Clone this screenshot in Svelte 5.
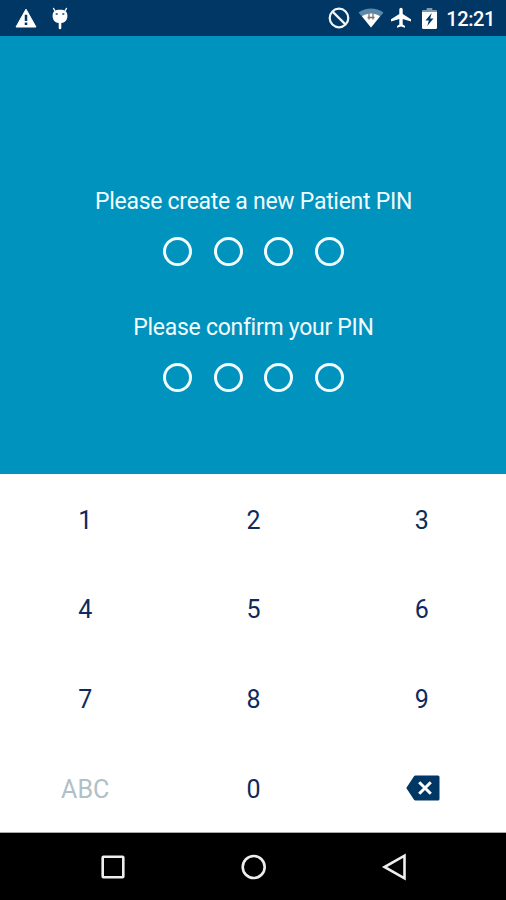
<script>
  /**
   * Patient PIN setup screen: two PIN rows above a numeric keypad
   */
  const PIN_LENGTH = 4;

  const prompts = ['Please create a new Patient PIN', 'Please confirm your PIN'];

  const keys = ['1', '2', '3', '4', '5', '6', '7', '8', '9', 'ABC', '0', 'delete'];
</script>

<div class="screen">
  <header class="status-bar">
    <svg class="warning" width="22" height="20" viewBox="0 0 22 20" aria-hidden="true">
      <path d="M11 1.200 21 19H1Z" fill="#fff" stroke="#fff" stroke-width="1" stroke-linejoin="round" />
      <path d="M11 6.800v6.200M11 14.400v2.500" stroke="#003764" stroke-width="2.500" />
    </svg>
    <svg class="debug" width="18" height="23" viewBox="0 0 18 23" aria-hidden="true">
      <path d="M4 4 2.500 1.400M14 4l1.500-2.600" stroke="#fff" stroke-width="1.300" stroke-linecap="round" />
      <path d="M1.600 9C1.600 4.500 4 2.800 9 2.800S16.400 4.500 16.400 9c0 4-2.600 6.700-6.100 7.100V21a1.300 1.300 0 0 1-2.600 0v-4.900C4.200 15.700 1.600 13 1.600 9Z" fill="#fff" />
      <path d="M4.700 7h2M11.300 7h2" stroke="#4c7496" stroke-width="1.800" />
    </svg>

    <div class="system">
      <svg class="blocked" width="22" height="22" viewBox="0 0 22 22" fill="none" stroke="#f2f5f8" stroke-width="2.200" aria-hidden="true">
        <circle cx="11" cy="11" r="9.300" />
        <path d="m4.600 4.600 12.800 12.800" />
      </svg>
      <svg class="wifi" width="26" height="20" viewBox="0 0 26 20" aria-hidden="true">
        <path d="M.5 4.500C8-.7 18-.7 25.500 4.500L13 19.500Z" fill="#5b88a8" />
        <path d="M4 8.200c5.500-3.600 12.500-3.600 18 0L13 19.500Z" fill="#fff" />
        <path d="M11 5.500v6M15 5.500v6M9.500 9.500h7" stroke="#77746f" stroke-width="1.300" />
      </svg>
      <svg class="plane" width="22" height="22" viewBox="0 0 22 22" fill="#fff" aria-hidden="true">
        <path d="M21 14.500v-2.200L12.700 7V2.500a1.700 1.700 0 0 0-3.400 0V7L1 12.300v2.200l8.300-2.600v5.500L7 19.100v1.700l4-1.200 4 1.200v-1.700l-2.300-1.700v-5.500Z" />
      </svg>
      <svg class="battery" width="15" height="21" viewBox="0 0 15 21" aria-hidden="true">
        <path d="M4.700 0h5.600v2H14q1 0 1 1v3H0V3q0-1 1-1h3.700Z" fill="#7f9bb1" />
        <path d="M0 4h15v15.500q0 1.500-1.500 1.500h-12Q0 21 0 19.500Z" fill="#fff" />
        <path d="M9.700 5 3.500 12.500h3.300L5.300 18l6.200-7.500H8.200Z" fill="#003764" />
      </svg>
      <span class="clock">12:21</span>
    </div>
  </header>

  <main class="pin-panel">
    {#each prompts as prompt}
      <section class="pin-entry">
        <h1>{prompt}</h1>
        <div class="dots">
          {#each Array(PIN_LENGTH) as _}
            <span class="dot"></span>
          {/each}
        </div>
      </section>
    {/each}
  </main>

  <div class="keypad">
    {#each keys as key}
      {#if key === 'delete'}
        <button class="key" aria-label="Delete">
          <svg width="34" height="26" viewBox="0 0 34 26" aria-hidden="true">
            <path d="M9.500.5H32Q33.500.5 33.500 2v22q0 1.500-1.500 1.500H9.500Q8.500 25.500 8 24.700L.3 13 8 1.300Q8.500.5 9.500.5Z" fill="#003764" />
            <path d="m13.200 7.200 11.600 11.600M24.800 7.200 13.200 18.800" stroke="#fff" stroke-width="3" />
          </svg>
        </button>
      {:else}
        <button class="key" class:muted={key === 'ABC'}>{key}</button>
      {/if}
    {/each}
  </div>

  <nav class="nav-bar">
    <svg width="26" height="26" viewBox="0 0 26 26" aria-hidden="true">
      <rect x="2.700" y="2.700" width="20.600" height="20.600" rx=".7" />
    </svg>
    <svg width="26" height="26" viewBox="0 0 26 26" aria-hidden="true">
      <circle cx="12.700" cy="13" r="11" />
    </svg>
    <svg width="26" height="28" viewBox="0 0 26 28" aria-hidden="true">
      <path d="M23.500 2.700v22.600L3.500 14Z" />
    </svg>
  </nav>
</div>

<style>
  :global(body) {
    margin: 0;
  }

  .screen {
    display: flex;
    flex-direction: column;
    width: 506px;
    height: 900px;
    overflow: hidden;
    font-family: Roboto, sans-serif;
    background: #fff;
  }

  svg {
    display: block;
    flex: none;
  }

  .status-bar {
    display: flex;
    align-items: center;
    flex: none;
    box-sizing: border-box;
    height: 36px;
    padding: 0 11px 0 15px;
    background: #003764;
  }

  .debug {
    margin-left: 14px;
  }

  .system {
    display: flex;
    align-items: center;
    margin-left: auto;
  }

  .wifi {
    margin-left: 7.5px;
  }

  .plane {
    margin-left: 6.5px;
  }

  .battery {
    margin-left: 10px;
  }

  .clock {
    margin: 2px 0 0 9px;
    font-size: 20px;
    font-weight: 500;
    letter-spacing: -0.4px;
    line-height: 24px;
    color: #fff;
  }

  .pin-panel {
    display: flex;
    flex-direction: column;
    align-items: center;
    gap: 47px;
    flex: none;
    box-sizing: border-box;
    height: 438px;
    padding: 152px 0 0 1px;
    background: #0093be;
  }

  .pin-entry {
    display: flex;
    flex-direction: column;
    align-items: center;
    gap: 21px;
    height: 79px;
  }

  h1 {
    margin: 0;
    font-size: 23px;
    font-weight: 400;
    letter-spacing: -0.28px;
    line-height: 28px;
    color: #f2fbfe;
    white-space: nowrap;
  }

  .dots {
    display: flex;
    gap: 21.6px;
  }

  .dot {
    box-sizing: border-box;
    width: 29px;
    height: 29px;
    border: 3px solid #f2fbfe;
    border-radius: 50%;
  }

  .keypad {
    display: grid;
    grid-template-columns: repeat(3, 1fr);
    grid-template-rows: repeat(4, 89.6px);
    flex: 1;
    min-height: 0;
    padding-left: 1px;
    border-bottom: 1px solid #a9a9a9;
  }

  .key {
    display: flex;
    align-items: center;
    justify-content: center;
    padding: 4px 0 0;
    border: none;
    background: none;
    font: 400 25px/30px Roboto, sans-serif;
    color: #0d2b5c;
  }

  .key svg {
    margin: 0 0 3px 2px;
  }

  .key.muted {
    color: #b0bfc8;
  }

  .nav-bar {
    display: flex;
    align-items: center;
    justify-content: space-between;
    flex: none;
    box-sizing: border-box;
    height: 67px;
    padding: 0 99px 0 100px;
    background: #000;
  }

  .nav-bar svg {
    fill: none;
    stroke: #eee;
    stroke-width: 2.6;
  }
</style>
